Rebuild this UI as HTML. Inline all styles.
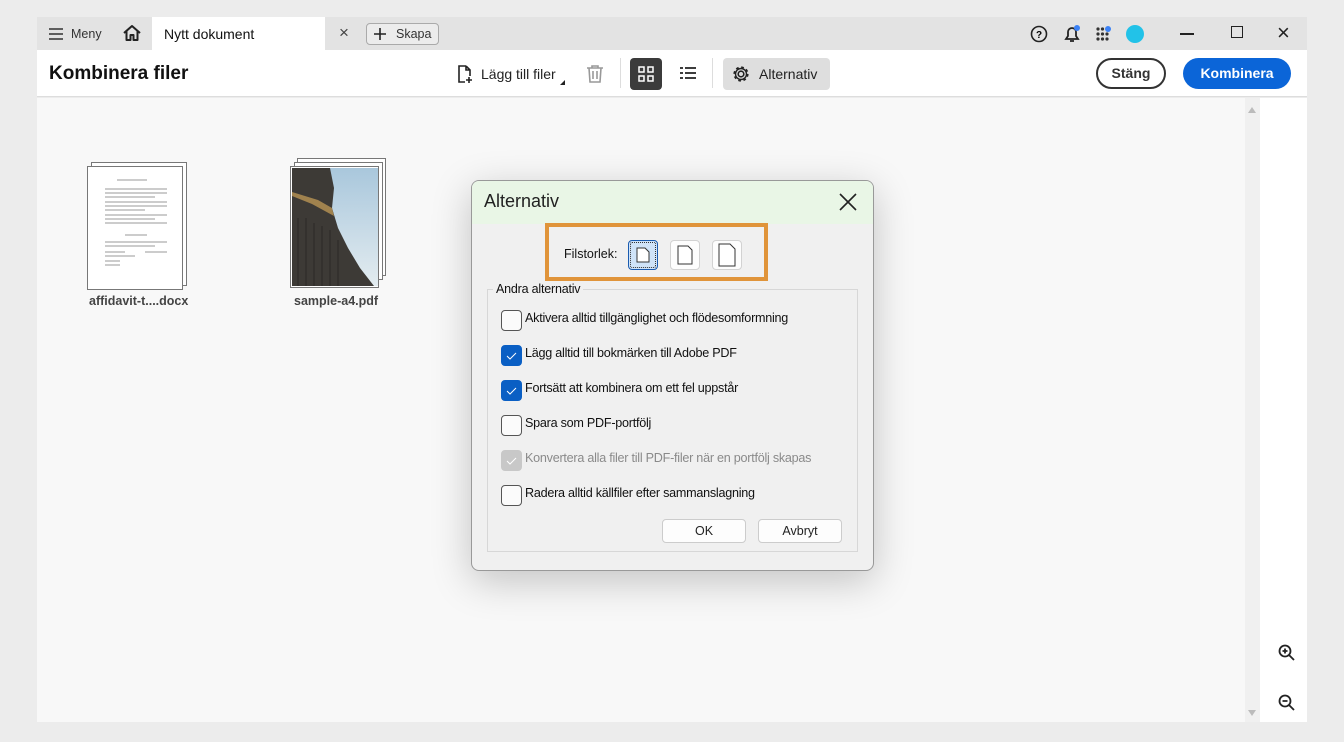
<!DOCTYPE html>
<html><head><meta charset="utf-8"><style>
*{box-sizing:border-box;margin:0;padding:0}
body{width:1344px;height:742px;background:#ececec;font-family:"Liberation Sans",Arial,sans-serif;position:relative;overflow:hidden;color:#222}
.a{position:absolute}
.tabbar{left:37px;top:17px;width:1270px;height:33px;background:#e3e3e3}
.hdr{left:37px;top:50px;width:1270px;height:47px;background:#fff;border-bottom:1px solid #ddd}
.content{left:37px;top:98px;width:1208px;height:624px;background:#f8f8f8}
.sb{left:1245px;top:98px;width:15px;height:624px;background:#f0f0f0}
.rp{left:1260px;top:98px;width:47px;height:624px;background:#fff}
.cb{position:absolute;left:501px;width:21px;height:21px;border:1px solid #555;border-radius:4px;background:#fbfbfb}
.cb.on{background:#0a5fc4;border-color:#0a5fc4}
.cb.dis{background:#c8c8c8;border-color:#c8c8c8}
.lbl{position:absolute;left:525px;font-size:12.6px;letter-spacing:-0.25px;color:#111}
.btn{position:absolute;height:24px;border:1px solid #ccc;border-radius:4px;background:#fdfdfd;font-size:12.5px;text-align:center;line-height:22px}
.pg{position:absolute;background:#fff;border:1px solid #777}
</style></head><body>
<div class="a tabbar"></div>
<svg class="a" style="left:48px;top:27px" width="16" height="14"><path d="M1 2h14M1 7h14M1 12h14" stroke="#333" stroke-width="1.6"/></svg>
<div class="a" style="left:71px;top:27px;font-size:12.5px;color:#333">Meny</div>
<svg class="a" style="left:122px;top:24px" width="20" height="18"><path d="M2 9 10 2l8 7M4.5 7v9h4v-5h3v5h4V7" fill="none" stroke="#222" stroke-width="2" stroke-linejoin="round"/></svg>
<div class="a" style="left:152px;top:17px;width:173px;height:33px;background:#fff"></div>
<div class="a" style="left:164px;top:26px;font-size:14px;color:#111">Nytt dokument</div>
<div class="a" style="left:339px;top:23px;font-size:17px;color:#444">×</div>
<div class="a" style="left:366px;top:23px;width:73px;height:22px;border:1px solid #aaa;border-radius:4px;background:#ececec"></div>
<svg class="a" style="left:374px;top:28px" width="12" height="12"><path d="M6 0v12M0 6h12" stroke="#222" stroke-width="1.6"/></svg>
<div class="a" style="left:396px;top:27px;font-size:12.5px;color:#333">Skapa</div>
<svg class="a" style="left:1030px;top:25px" width="18" height="18"><circle cx="9" cy="9" r="7.5" fill="none" stroke="#222" stroke-width="1.6"/><text x="9" y="13" font-size="10" font-weight="bold" text-anchor="middle" font-family="Liberation Sans">?</text></svg>
<svg class="a" style="left:1062px;top:24px" width="20" height="20"><path d="M4 15h12l-2-3V8a4 4 0 0 0-8 0v4zM8 17h4" fill="none" stroke="#222" stroke-width="1.8"/><circle cx="15" cy="4" r="3" fill="#3b82f6"/></svg>
<svg class="a" style="left:1095px;top:25px" width="20" height="20"><g fill="#333"><circle cx="3" cy="4" r="1.6"/><circle cx="7.5" cy="4" r="1.6"/><circle cx="3" cy="9" r="1.6"/><circle cx="7.5" cy="9" r="1.6"/><circle cx="12" cy="9" r="1.6"/><circle cx="3" cy="14" r="1.6"/><circle cx="7.5" cy="14" r="1.6"/><circle cx="12" cy="14" r="1.6"/></g><circle cx="13" cy="4" r="3" fill="#3b82f6"/></svg>
<div class="a" style="left:1126px;top:25px;width:18px;height:18px;border-radius:50%;background:#22c2e8"></div>
<div class="a" style="left:1180px;top:33px;width:14px;height:1.5px;background:#222"></div>
<div class="a" style="left:1231px;top:26px;width:12px;height:12px;border:1.5px solid #222"></div>
<div class="a" style="left:1277px;top:20px;font-size:22px;color:#222">×</div>

<div class="a hdr"></div>
<div class="a" style="left:49px;top:63px;font-size:19px;font-weight:bold;color:#111">Kombinera filer</div>
<svg class="a" style="left:455px;top:64px" width="20" height="20"><path d="M11 2H4v16h6M11 2l4 4v6M11 2v4h4M14 13v6M11 16h6" fill="none" stroke="#222" stroke-width="1.6"/></svg>
<div class="a" style="left:481px;top:66px;font-size:14px;color:#222">Lägg till filer</div>
<div class="a" style="left:560px;top:80px;width:0;height:0;border-left:5px solid transparent;border-bottom:5px solid #222"></div>
<svg class="a" style="left:585px;top:64px" width="20" height="20"><path d="M2 4h16M7 4V2h6v2M4 4l1 14h10l1-14M8 7v8M12 7v8" fill="none" stroke="#999" stroke-width="1.6"/></svg>
<div class="a" style="left:620px;top:58px;width:1px;height:30px;background:#ddd"></div>
<div class="a" style="left:630px;top:58px;width:32px;height:32px;border-radius:4px;background:#3b3b3b"></div>
<svg class="a" style="left:638px;top:66px" width="16" height="16"><g fill="none" stroke="#fff" stroke-width="1.5"><rect x="1" y="1" width="5" height="5"/><rect x="10" y="1" width="5" height="5"/><rect x="1" y="10" width="5" height="5"/><rect x="10" y="10" width="5" height="5"/></g></svg>
<svg class="a" style="left:679px;top:66px" width="18" height="16"><g stroke="#222" stroke-width="1.8"><path d="M1 2h3M1 7h3M1 12h3M6 2h11M6 7h11M6 12h11"/></g></svg>
<div class="a" style="left:712px;top:58px;width:1px;height:30px;background:#ddd"></div>
<div class="a" style="left:723px;top:58px;width:107px;height:32px;border-radius:4px;background:#dedede"></div>
<svg class="a" style="left:732px;top:65px" width="18" height="18"><circle cx="9" cy="9" r="2.8" fill="none" stroke="#222" stroke-width="1.6"/><circle cx="9" cy="9" r="6.5" fill="none" stroke="#222" stroke-width="2.2" stroke-dasharray="2.6 2.5"/><circle cx="9" cy="9" r="5.5" fill="none" stroke="#222" stroke-width="1.4"/></svg>
<div class="a" style="left:759px;top:66px;font-size:14px;color:#222">Alternativ</div>
<div class="a" style="left:1096px;top:58px;width:70px;height:31px;border:2px solid #333;border-radius:16px;font-size:14px;font-weight:bold;text-align:center;line-height:27px;color:#333">Stäng</div>
<div class="a" style="left:1183px;top:58px;width:108px;height:31px;border-radius:16px;background:#0b65d8;font-size:14px;font-weight:bold;text-align:center;line-height:31px;color:#fff">Kombinera</div>

<div class="a content"></div>
<div class="a sb"></div>
<div class="a" style="left:1248px;top:107px;border-left:4px solid transparent;border-right:4px solid transparent;border-bottom:6px solid #bbb"></div>
<div class="a" style="left:1248px;top:710px;border-left:4px solid transparent;border-right:4px solid transparent;border-top:6px solid #bbb"></div>
<div class="a rp"></div>
<svg class="a" style="left:1278px;top:644px" width="18" height="18"><circle cx="7" cy="7" r="5.5" fill="none" stroke="#222" stroke-width="1.8"/><path d="M11 11l5 5M4.5 7h5M7 4.5v5" stroke="#222" stroke-width="1.8"/></svg>
<svg class="a" style="left:1278px;top:694px" width="18" height="18"><circle cx="7" cy="7" r="5.5" fill="none" stroke="#222" stroke-width="1.8"/><path d="M11 11l5 5M4.5 7h5" stroke="#222" stroke-width="1.8"/></svg>

<div class="pg" style="left:91px;top:162px;width:96px;height:124px"></div>
<div class="pg" style="left:87px;top:166px;width:96px;height:124px"></div>
<svg class="a" style="left:95px;top:175px" width="80" height="100"><g stroke="#999" stroke-width="1"><path d="M22 5h30M10 14h62M10 18h62M10 22h50M10 27h62M10 31h62M10 35h40M10 40h62M10 44h50M10 48h62M30 60h22M10 67h62M10 71h50M10 77h20M50 77h22M10 81h30M10 86h15M10 90h15"/></g></svg>
<div class="a" style="left:89px;top:294px;font-size:12.5px;font-weight:bold;color:#444">affidavit-t....docx</div>
<div class="pg" style="left:297px;top:158px;width:89px;height:118px"></div>
<div class="pg" style="left:294px;top:162px;width:89px;height:118px"></div>
<div class="pg" style="left:290px;top:166px;width:89px;height:122px"></div>
<svg class="a" style="left:292px;top:168px" width="86" height="118"><defs><linearGradient id="s" x1="0" y1="0" x2="0" y2="1"><stop offset="0" stop-color="#a9c7dc"/><stop offset="1" stop-color="#e3ecf0"/></linearGradient></defs><rect width="86" height="118" fill="url(#s)"/><path d="M0 0h38l4 20-2 20 6 20 10 20 12 20 14 18H0z" fill="#3d3a36"/><path d="M0 28l20 8 22 12-2-8-14-8L0 24z" fill="#a0824e"/><path d="M6 50v68M14 50v68M22 55v63M30 58v60M38 62v56M46 72v46" stroke="#2a2826" stroke-width="1"/></svg>
<div class="a" style="left:294px;top:294px;font-size:12.5px;font-weight:bold;color:#444">sample-a4.pdf</div>

<div class="a" style="left:471px;top:180px;width:403px;height:391px;border:1px solid #999;border-radius:8px;background:#f0f0f0;box-shadow:0 10px 40px rgba(0,0,0,.22);overflow:hidden">
<div style="height:43px;background:#e9f6e6"></div></div>
<div class="a" style="left:484px;top:191px;font-size:18px;color:#222">Alternativ</div>
<svg class="a" style="left:839px;top:193px" width="18" height="18"><path d="M1 1l16 16M17 1L1 17" stroke="#222" stroke-width="1.6"/></svg>
<div class="a" style="left:545px;top:223px;width:223px;height:58px;border:4px solid #e0943a"></div>
<div class="a" style="left:564px;top:247px;font-size:12.5px;color:#111">Filstorlek:</div>
<div class="a" style="left:628px;top:240px;width:30px;height:30px;border:1px solid #1a5bb0;border-radius:4px;background:#cfe3f8;outline:1px dotted #333;outline-offset:-3px"></div>
<div class="a" style="left:670px;top:240px;width:30px;height:30px;border:1px solid #d2d2d2;border-radius:4px;background:#fdfdfd"></div>
<div class="a" style="left:712px;top:240px;width:30px;height:30px;border:1px solid #d2d2d2;border-radius:4px;background:#fdfdfd"></div>
<svg class="a" style="left:636px;top:247px" width="14" height="16"><path d="M1 1h8l4 4v10H1z" fill="#fff" stroke="#333"/></svg>
<svg class="a" style="left:677px;top:245px" width="16" height="20"><path d="M1 1h10l4 4v14H1z" fill="#fff" stroke="#333"/></svg>
<svg class="a" style="left:718px;top:243px" width="18" height="24"><path d="M1 1h11l5 5v17H1z" fill="#fff" stroke="#333"/></svg>
<div class="a" style="left:487px;top:289px;width:371px;height:263px;border:1px solid #d7d7d7"></div>
<div class="a" style="left:493px;top:282px;padding:0 3px;background:#f0f0f0;font-size:12.5px;letter-spacing:-0.2px;color:#111">Andra alternativ</div>

<div class="cb" style="top:310px"></div><div class="lbl" style="top:311px">Aktivera alltid tillgänglighet och flödesomformning</div>
<div class="cb on" style="top:345px"><svg width="19" height="19"><path d="M5 10l3 3 6-6" fill="none" stroke="#fff" stroke-width="1"/></svg></div><div class="lbl" style="top:346px">Lägg alltid till bokmärken till Adobe PDF</div>
<div class="cb on" style="top:380px"><svg width="19" height="19"><path d="M5 10l3 3 6-6" fill="none" stroke="#fff" stroke-width="1"/></svg></div><div class="lbl" style="top:381px">Fortsätt att kombinera om ett fel uppstår</div>
<div class="cb" style="top:415px"></div><div class="lbl" style="top:416px">Spara som PDF-portfölj</div>
<div class="cb dis" style="top:450px"><svg width="19" height="19"><path d="M5 10l3 3 6-6" fill="none" stroke="#fff" stroke-width="1"/></svg></div><div class="lbl" style="top:451px;color:#8a8a8a">Konvertera alla filer till PDF-filer när en portfölj skapas</div>
<div class="cb" style="top:485px"></div><div class="lbl" style="top:486px">Radera alltid källfiler efter sammanslagning</div>
<div class="btn" style="left:662px;top:519px;width:84px">OK</div>
<div class="btn" style="left:758px;top:519px;width:84px">Avbryt</div>
</body></html>
